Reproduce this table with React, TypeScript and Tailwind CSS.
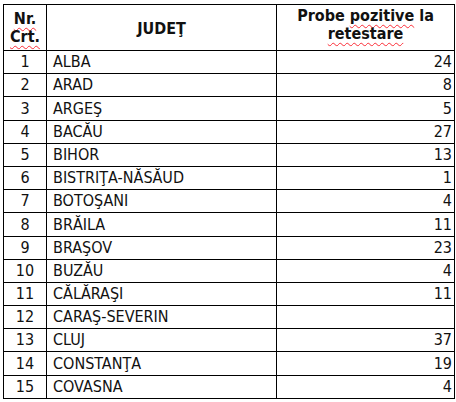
const rows: [number, string, string][] = [
	[1, "ALBA", "24"],
	[2, "ARAD", "8"],
	[3, "ARGEŞ", "5"],
	[4, "BACĂU", "27"],
	[5, "BIHOR", "13"],
	[6, "BISTRIŢA-NĂSĂUD", "1"],
	[7, "BOTOŞANI", "4"],
	[8, "BRĂILA", "11"],
	[9, "BRAŞOV", "23"],
	[10, "BUZĂU", "4"],
	[11, "CĂLĂRAŞI", "11"],
	[12, "CARAŞ-SEVERIN", ""],
	[13, "CLUJ", "37"],
	[14, "CONSTANŢA", "19"],
	[15, "COVASNA", "4"],
];

const spell = "underline decoration-wavy decoration-red-500 decoration-1 underline-offset-[3px]";

export default function App() {
	return (
		<div className="min-h-screen bg-white pl-[3px] pt-[4px] font-['DejaVu_Sans_Condensed','DejaVu_Sans',sans-serif] text-[#111]">
			<table className="w-[451px] table-fixed border-collapse border border-black">
				<colgroup>
					<col className="w-[43px]" />
					<col className="w-[230px]" />
					<col className="w-[178px]" />
				</colgroup>
				<thead>
					<tr className="h-[46px] text-[16px] font-bold leading-[17.5px]">
						<th className="border border-black p-0 align-middle">
							<span className={spell}>Nr.</span>
							<br />
							<span className={spell}>Crt.</span>
						</th>
						<th className="border border-black p-0 pt-[2px] align-middle">JUDEŢ</th>
						<th className="border border-black p-0 pt-[2px] align-top">
							Probe <span className={spell}>pozitive</span> la
							<br />
							<span className={spell}>retestare</span>
						</th>
					</tr>
				</thead>
				<tbody>
					{rows.map(([nr, name, count]) => (
						<tr key={nr} className="h-[23.2px] text-[16px] leading-[16px]">
							<td className="border border-black p-0 pb-[3px] text-center align-bottom">{nr}</td>
							<td className="border border-black p-0 pb-[3px] pl-[6px] align-bottom">{name}</td>
							<td className="border border-black p-0 pb-[3px] pr-[2px] text-right align-bottom">{count}</td>
						</tr>
					))}
				</tbody>
			</table>
		</div>
	);
}
